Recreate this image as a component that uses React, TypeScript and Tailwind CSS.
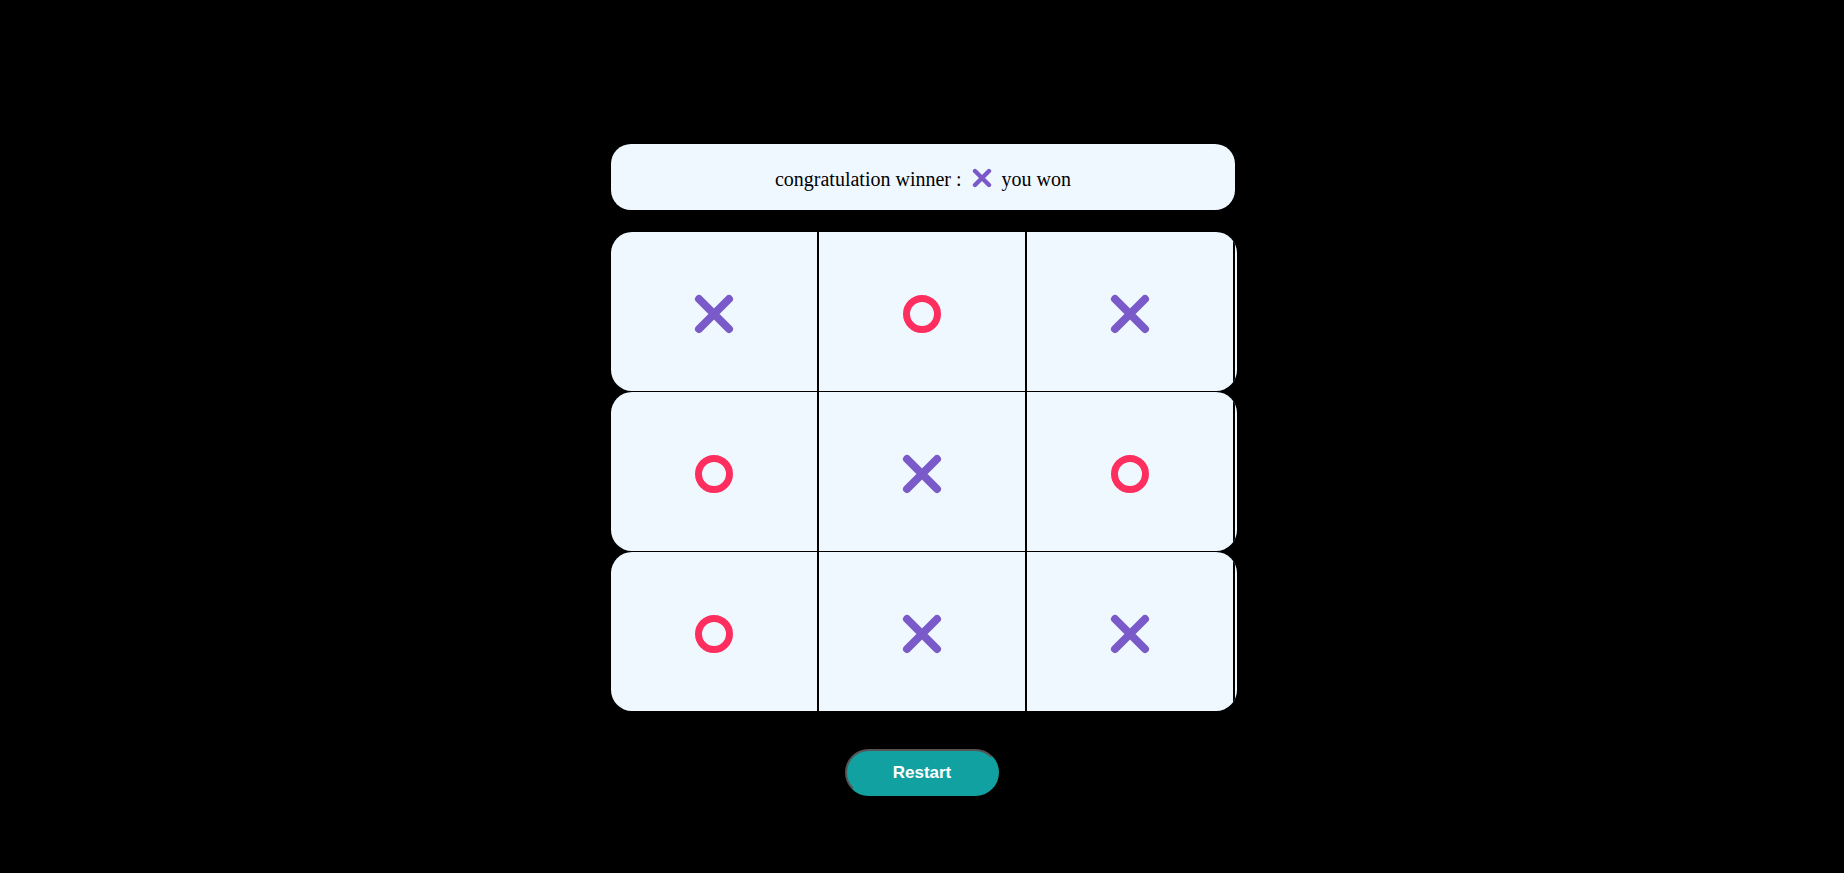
import { useState } from "react";

type Mark = "x" | "o";

const board: Mark[][] = [
  ["x", "o", "x"],
  ["o", "x", "o"],
  ["o", "x", "x"],
];

function Cross({ size = 40 }: { size?: number }) {
  return (
    <svg width={size} height={size} viewBox="0 0 40 40" className="block">
      <path d="M5 5 L35 35 M35 5 L5 35" stroke="#7a5ac8" strokeWidth="8" strokeLinecap="round" fill="none" />
    </svg>
  );
}

function Circle() {
  return (
    <svg width="40" height="40" viewBox="0 0 40 40" className="block">
      <circle cx="20" cy="20" r="15.5" stroke="#fe2e5f" strokeWidth="7" fill="none" />
    </svg>
  );
}

export default function App() {
  const [cells] = useState(board);

  return (
    <div className="min-h-screen w-full bg-black flex flex-col items-center pt-[144px]">
      {/* winner banner */}
      <div className="w-[624px] h-[66px] ml-[2px] rounded-[20px] bg-[#f0f8ff] flex items-center justify-center pt-[4px] font-['Liberation_Serif',serif] text-[20px] text-black">
        <span>congratulation winner :</span>
        <span className="inline-block mx-[10px] mt-[-2px]">
          <svg width="20" height="20" viewBox="0 0 20 20" className="block">
            <path d="M3 3 L17 17 M17 3 L3 17" stroke="#7a5ac8" strokeWidth="4.4" strokeLinecap="round" fill="none" />
          </svg>
        </span>
        <span>you won</span>
      </div>

      {/* board */}
      <div className="mt-[22px] ml-[4px] flex flex-col gap-px">
        {cells.map((row, r) => (
          <div key={r} className="w-[626px] h-[159px] rounded-[21px] bg-[#f0f8ff] flex overflow-hidden">
            {row.map((m, c) => (
              <div
                key={c}
                className="w-[208px] h-full border-r-2 border-black flex items-center justify-center pt-[5px]"
              >
                {m === "x" ? <Cross /> : <Circle />}
              </div>
            ))}
          </div>
        ))}
      </div>

      <button className="mt-[38px] w-[154px] h-[47px] rounded-full bg-[#12a1a1] border-2 border-t-[#555] border-l-[#555] border-r-[#12a1a1] border-b-[#12a1a1] text-white font-bold text-[17px] font-['Liberation_Sans',Arial,sans-serif] cursor-pointer">
        Restart
      </button>
    </div>
  );
}
